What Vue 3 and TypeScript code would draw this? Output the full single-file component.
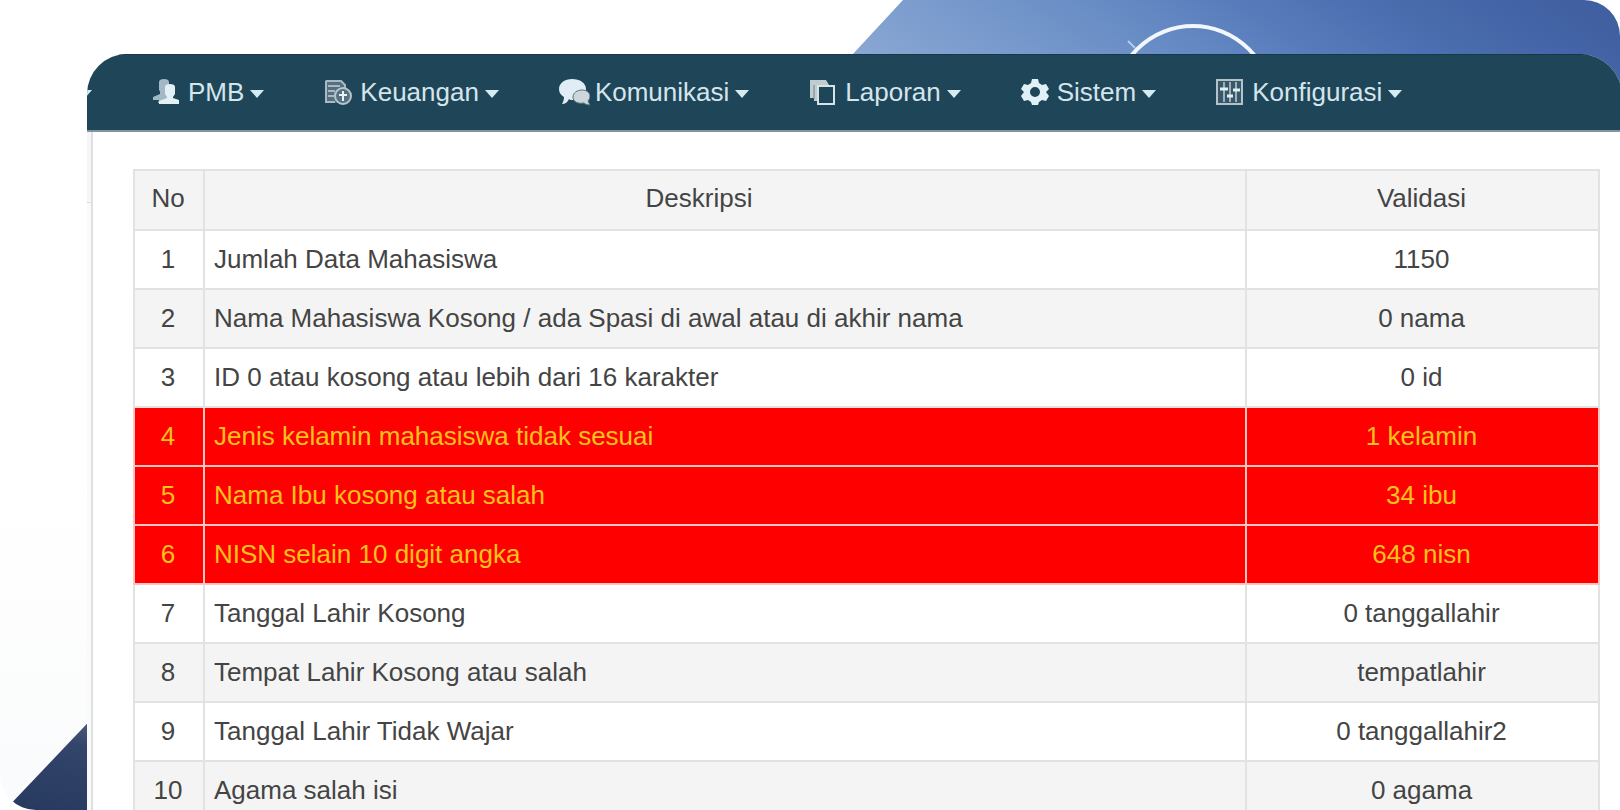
<script setup lang="ts">
interface MenuItem {
  label: string
  icon: 'users' | 'money' | 'chat' | 'copy' | 'gear' | 'sliders'
}

interface CheckRow {
  description: string
  result: string
  invalid?: boolean
}

const menu: MenuItem[] = [
  { label: 'PMB', icon: 'users' },
  { label: 'Keuangan', icon: 'money' },
  { label: 'Komunikasi', icon: 'chat' },
  { label: 'Laporan', icon: 'copy' },
  { label: 'Sistem', icon: 'gear' },
  { label: 'Konfigurasi', icon: 'sliders' },
]

const rows: CheckRow[] = [
  { description: 'Jumlah Data Mahasiswa', result: '1150' },
  { description: 'Nama Mahasiswa Kosong / ada Spasi di awal atau di akhir nama', result: '0 nama' },
  { description: 'ID 0 atau kosong atau lebih dari 16 karakter', result: '0 id' },
  { description: 'Jenis kelamin mahasiswa tidak sesuai', result: '1 kelamin', invalid: true },
  { description: 'Nama Ibu kosong atau salah', result: '34 ibu', invalid: true },
  { description: 'NISN selain 10 digit angka', result: '648 nisn', invalid: true },
  { description: 'Tanggal Lahir Kosong', result: '0 tanggallahir' },
  { description: 'Tempat Lahir Kosong atau salah', result: 'tempatlahir' },
  { description: 'Tanggal Lahir Tidak Wajar', result: '0 tanggallahir2' },
  { description: 'Agama salah isi', result: '0 agama' },
]
</script>

<template>
  <div class="page">
    <svg class="sky" viewBox="0 0 780 110" aria-hidden="true">
      <defs>
        <linearGradient id="sky-fill" x1="0" y1="0.6" x2="1" y2="0.4">
          <stop offset="0" stop-color="#93add6" />
          <stop offset="0.2" stop-color="#7f9fcf" />
          <stop offset="0.45" stop-color="#688dc5" />
          <stop offset="0.62" stop-color="#587cbb" />
          <stop offset="0.75" stop-color="#4c70b1" />
          <stop offset="1" stop-color="#4060a2" />
        </linearGradient>
      </defs>
      <path d="M63 0H780V110H-39Z" fill="url(#sky-fill)" />
      <circle cx="353" cy="105" r="79" fill="none" stroke="#f1f7fd" stroke-width="4" />
      <path d="M288 41l7 7" stroke="#b5ccec" stroke-width="2" />
    </svg>
    <svg class="hill" viewBox="0 0 100 100" aria-hidden="true">
      <defs>
        <linearGradient id="hill-fill" x1="0.6" y1="0" x2="0.4" y2="1">
          <stop offset="0" stop-color="#536178" />
          <stop offset="0.3" stop-color="#34456b" />
          <stop offset="1" stop-color="#273a60" />
        </linearGradient>
      </defs>
      <path d="M100 0V100H5Z" fill="url(#hill-fill)" />
    </svg>

    <main class="panel">
      <nav class="navbar">
        <ul class="menu">
          <li>
            <button class="menu-item" type="button" aria-label="Menu">
              <svg class="caret" viewBox="0 0 14 8"><path d="M0 0H14L7 8Z" /></svg>
            </button>
          </li>
          <li v-for="item in menu" :key="item.label">
            <button class="menu-item" type="button">
              <svg v-if="item.icon === 'users'" class="icon" viewBox="0 0 28 28">
                <g fill="#a3b8c6">
                  <path d="M7 4c0-2 2-3 5-3s5 1 5 3v8l-3 3H9l-2-3Z" />
                  <path d="M8 13h7v12H6l1-3H1v-3l7-3Z" />
                </g>
                <path
                  d="M13 9c0-2 2-3 5-3s5 1 5 3v7l-2 3v1l6 2v4H7v-3l8-3v-1l-2-3Z"
                  fill="#e3f1f7"
                />
              </svg>
              <svg v-else-if="item.icon === 'money'" class="icon" viewBox="0 0 28 28">
                <path d="M1 2h16l4 4v7l-9 12H2Z" fill="#567080" />
                <g fill="none" stroke="#a9bac6" stroke-width="2">
                  <path d="M2 3h15l4 4v4M2 3v21h9" />
                  <path d="M4 8h12M4 13h7M4 18h6" />
                </g>
                <circle cx="19" cy="18" r="8" fill="#56717f" stroke="#b7c6cf" stroke-width="2" />
                <path d="M19 13v10M15 17h8" stroke="#e6f3f8" stroke-width="2" />
              </svg>
              <svg v-else-if="item.icon === 'chat'" class="icon wide" viewBox="0 0 31 28">
                <path
                  d="M13 1c8 0 14 4 14 10s-6 11-13 11c-2 0-3 0-4-1-1 3-4 5-7 5 1-2 2-4 2-7-3-2-5-4-5-8C0 5 6 1 13 1Z"
                  fill="#e1edf5"
                />
                <path
                  d="M23 12c5 0 8 3 8 6 0 2-1 4-2 5l2 4c-3 0-5-1-6-2-6 1-11-1-11-6 0-4 4-7 9-7Z"
                  fill="#ccd6db"
                  stroke="#56717f"
                />
              </svg>
              <svg v-else-if="item.icon === 'copy'" class="icon" viewBox="0 0 28 28">
                <path d="M1 2h16l3 5v3H8v13H5v-3H1Z" fill="#c0cccf" />
                <path d="M5 7v14" stroke="#6d8590" />
                <path d="M9 8h16v18H9Z" fill="#1f4658" stroke="#d5e4e5" stroke-width="2" />
              </svg>
              <svg v-else-if="item.icon === 'gear'" class="icon" viewBox="0 0 28 28">
                <path
                  fill-rule="evenodd"
                  d="M11 1h6l1 4 3 2 4-1 3 5-3 3 3 4-3 5-4-1-3 2-1 3h-6l-1-3-3-2-4 1-3-5 3-4-3-3 3-5 4 1 3-2ZM14 9a5 5 0 1 0 0 10a5 5 0 0 0 0-10Z"
                  fill="#e1f0f6"
                />
              </svg>
              <svg v-else class="icon" viewBox="0 0 28 28">
                <rect x="1" y="2" width="25" height="24" fill="#36586a" stroke="#b5c3c8" stroke-width="2" />
                <path d="M8 4v20M14 4v20M20 4v20" stroke="#9fb1b8" stroke-width="2" />
                <path d="M4 11h8M11 18h6M17 12h7" stroke="#e1f0e8" stroke-width="3" />
              </svg>
              <span class="label">{{ item.label }}</span>
              <svg class="caret" viewBox="0 0 14 8"><path d="M0 0H14L7 8Z" /></svg>
            </button>
          </li>
        </ul>
      </nav>

      <div class="body">
        <aside class="rail"><div class="rail-top"></div></aside>
        <section class="content">
          <table>
            <colgroup>
              <col class="col-no" />
              <col />
              <col class="col-result" />
            </colgroup>
            <thead>
              <tr>
                <th scope="col">No</th>
                <th scope="col" class="head-description">Deskripsi</th>
                <th scope="col">Validasi</th>
              </tr>
            </thead>
            <tbody>
              <tr v-for="(row, index) in rows" :key="row.description" :class="{ invalid: row.invalid }">
                <td>{{ index + 1 }}</td>
                <td class="description">{{ row.description }}</td>
                <td>{{ row.result }}</td>
              </tr>
            </tbody>
          </table>
        </section>
      </div>
    </main>
  </div>
</template>

<style>
body {
  margin: 0;
  background: #ffffff;
}
</style>

<style scoped>
.page {
  position: relative;
  display: flex;
  box-sizing: border-box;
  height: 100vh;
  padding: 54px 0 0 87px;
  overflow: hidden;
  border-radius: 36px;
  border-bottom-right-radius: 0;
  background: linear-gradient(#ffffff 60%, #fafbfc);
  font-family: "Liberation Sans", Arial, Helvetica, sans-serif;
  font-size: 26px;
  line-height: 30px;
  color: #444444;
}

.sky {
  position: absolute;
  top: 0;
  right: 0;
  width: 780px;
  height: 110px;
  overflow: visible;
}

.hill {
  position: absolute;
  bottom: 0;
  left: 0;
  width: 100px;
  height: 100px;
}

.panel {
  position: relative;
  flex: 1;
  min-width: 0;
  margin-right: -2px;
  padding-right: 2px;
  overflow: hidden;
  border-radius: 40px 42px 0 0;
  background: #ffffff;
}

.navbar {
  margin-right: -2px;
  border-top: 1px solid #17384b;
  border-bottom: 2px solid #82949f;
  background: #1f4658;
}

.menu {
  display: flex;
  gap: 60px;
  margin: 0 0 0 -9px;
  padding: 0;
  list-style: none;
}

.menu-item {
  display: flex;
  align-items: center;
  height: 75px;
  padding: 0 0 2px;
  border: 0;
  background: none;
  font: inherit;
  color: #d5e5ec;
  white-space: nowrap;
  cursor: pointer;
}

.icon {
  width: 28px;
  height: 28px;
  margin-right: 8px;
}

.icon.wide {
  width: 31px;
  margin-right: 5px;
}

.label {
  margin-right: 6px;
}

.caret {
  width: 14px;
  height: 8px;
  margin-top: 4px;
  fill: #d5ebf2;
}

.body {
  display: flex;
  min-height: 100%;
}

.rail {
  flex: none;
  width: 4px;
  border-right: 2px solid #dedfe3;
  background: #fafafa;
}

.rail-top {
  height: 70px;
  border-bottom: 1px solid #dddddd;
  background: #f6f6f6;
}

.content {
  flex: 1;
  min-width: 0;
  padding: 37px 20px 0 40px;
}

table {
  width: 100%;
  table-layout: fixed;
  border-collapse: collapse;
}

.col-no {
  width: 70px;
}

.col-result {
  width: 353px;
}

th,
td {
  box-sizing: border-box;
  height: 59px;
  padding: 0 10px 2px;
  border: 2px solid #e2e2e2;
  font-weight: 400;
  text-align: center;
  vertical-align: middle;
}

th {
  height: 60px;
  padding-bottom: 4px;
}

td:first-child,
td:last-child,
th:first-child,
th:last-child {
  padding-right: 12px;
}

thead th,
tbody tr:nth-child(even) {
  background: #f4f4f4;
}

th.head-description {
  padding-right: 62px;
}

td.description {
  padding-left: 9px;
  text-align: left;
}

tbody tr.invalid {
  background: #ff0000;
  color: #ffc21a;
}

tbody tr.invalid td {
  border-color: #ffc4c0;
}
</style>
